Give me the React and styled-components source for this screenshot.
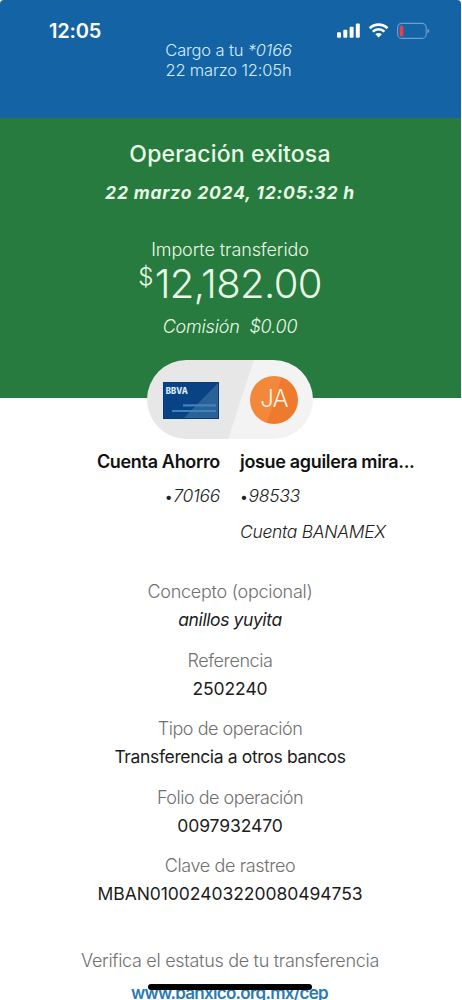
import styled, { createGlobalStyle } from "styled-components"

const details = [
    { label: "Concepto (opcional)", labelSpacing: -0.27, value: "anillos yuyita", spacing: -0.4, italic: true },
    { label: "Referencia", labelSpacing: -0.4, value: "2502240", spacing: -0.1 },
    { label: "Tipo de operación", labelSpacing: -0.46, value: "Transferencia a otros bancos", spacing: -0.35 },
    { label: "Folio de operación", labelSpacing: -0.48, value: "0097932470", spacing: -0.1 },
    { label: "Clave de rastreo", labelSpacing: -0.38, value: "MBAN01002403220080494753", spacing: -0.05 },
]

export default function App() {
    return (
        <>
            <GlobalStyle />
            <Screen>
                <Header>
                    <StatusBar>
                        <Clock>12:05</Clock>
                        <StatusIcons />
                    </StatusBar>
                    <HeaderText>
                        <p>Cargo a tu <em>*0166</em></p>
                        <p>22 marzo 12:05h</p>
                    </HeaderText>
                </Header>
                <Summary>
                    <Title>Operación exitosa</Title>
                    <DateText>22 marzo 2024, 12:05:32 h</DateText>
                    <AmountLabel>Importe transferido</AmountLabel>
                    <Amount><sup>$</sup>12,182.00</Amount>
                    <Fee>Comisión&nbsp; $0.00</Fee>
                </Summary>
                <Pill>
                    <BankCard />
                    <Avatar>JA</Avatar>
                </Pill>
                <Accounts>
                    <Account $align="right">
                        <h2>Cuenta Ahorro</h2>
                        <p><b>•</b>70166</p>
                    </Account>
                    <Account>
                        <h2>josue aguilera mira...</h2>
                        <p><b>•</b>98533</p>
                        <p>Cuenta BANAMEX</p>
                    </Account>
                </Accounts>
                <Details>
                    {details.map((d) => (
                        <div key={d.label}>
                            <Label $spacing={d.labelSpacing}>{d.label}</Label>
                            <Value $italic={d.italic} $spacing={d.spacing}>{d.value}</Value>
                        </div>
                    ))}
                </Details>
                <Verify>Verifica el estatus de tu transferencia</Verify>
                <Link>www.banxico.org.mx/cep</Link>
                <HomeBar />
            </Screen>
        </>
    )
}

function StatusIcons() {
    return (
        <svg width="94" height="18" viewBox="0 0 94 18" fill="none">
            <g fill="#fff">
                <rect x="1" y="10.2" width="4" height="5.6" rx="1" />
                <rect x="7.3" y="7.8" width="4" height="8" rx="1" />
                <rect x="13.6" y="4.8" width="4" height="11" rx="1" />
                <rect x="19.8" y="1.4" width="4" height="14.4" rx="1" />
            </g>
            <g stroke="#fff" strokeWidth="2.7">
                <path d="M33.7 6.2A13 13 0 0 1 51.5 6.2" />
                <path d="M36.8 9.6A8.3 8.3 0 0 1 48.4 9.6" />
            </g>
            <path d="M39.4 12.2A4.6 4.6 0 0 1 45.8 12.2L42.6 15.6Z" fill="#fff" />
            <rect x="61.6" y="1.4" width="28.6" height="15" rx="4.2" stroke="#6f9fd0" strokeWidth="1.1" />
            <rect x="63.6" y="3.5" width="3.8" height="10.8" rx="1.5" fill="#e8404a" />
            <path d="M91.4 6.7Q93.4 7.5 93.4 9T91.4 11.3Z" fill="#6f9fd0" />
        </svg>
    )
}

function BankCard() {
    return (
        <CardArt viewBox="0 0 56 37">
            <rect width="56" height="37" fill="#0a4385" />
            <path d="M56 0V37H20Z" fill="#2a6298" />
            <path d="M20 23.4H53M9 29H53" stroke="#3f83bb" strokeWidth="2.2" />
            <rect x=".5" y=".5" width="55" height="36" fill="none" stroke="#073b7a" />
            <text x="2.8" y="11.8" textLength="22" lengthAdjust="spacingAndGlyphs">BBVA</text>
        </CardArt>
    )
}

const GlobalStyle = createGlobalStyle`
    body {
        margin: 0;
        background-color: #fff;
        font-family: Inter, "Noto Sans", sans-serif;
    }
    p, h1, h2 {
        margin: 0;
    }
`

const Screen = styled.div`
    position: relative;
    display: flex;
    flex-direction: column;
    width: 461px;
    height: 1000px;
    overflow: hidden;
    text-align: center;
    > * {
        flex-shrink: 0;
    }
`

const Header = styled.header`
    height: 118px;
    box-sizing: border-box;
    padding-top: 20px;
    border-radius: 4px 4px 0 0;
    background-color: #1464a5;
    color: #fff;
`

const StatusBar = styled.div`
    display: flex;
    justify-content: space-between;
    height: 20px;
    padding: 0 31px 0 49px;
    svg {
        margin-top: 2px;
    }
`

const Clock = styled.span`
    font-size: 20px;
    line-height: 22px;
    font-weight: 600;
    letter-spacing: -0.2px;
`

const HeaderText = styled.div`
    display: flex;
    flex-direction: column;
    padding-right: 4px;
    font-size: 16.5px;
    line-height: 20px;
    font-weight: 300;
    letter-spacing: -0.15px;
    color: #d3ecfa;
`

const Summary = styled.section`
    display: flex;
    flex-direction: column;
    height: 280px;
    padding-right: 1px;
    background-color: #277b3e;
    color: #eaf8e6;
`

const Title = styled.h1`
    margin-top: 21px;
    font-size: 23px;
    line-height: 30px;
    font-weight: 500;
    letter-spacing: 0.15px;
`

const DateText = styled.p`
    margin-top: 12px;
    font-size: 17.5px;
    line-height: 24px;
    font-weight: 700;
    font-style: italic;
    letter-spacing: 0.8px;
`

const AmountLabel = styled.p`
    margin-top: 33px;
    font-size: 18px;
    line-height: 24px;
    font-weight: 300;
    letter-spacing: -0.1px;
`

const Amount = styled.p`
    height: 44px;
    font-size: 40px;
    line-height: 44px;
    font-weight: 300;
    letter-spacing: -0.6px;
    sup {
        display: inline-block;
        vertical-align: 13px;
        margin-right: 2px;
        font-size: 24px;
        line-height: 20px;
    }
`

const Fee = styled.p`
    margin-top: 9px;
    font-size: 18px;
    line-height: 24px;
    font-weight: 300;
    font-style: italic;
    letter-spacing: -0.18px;
`

const Pill = styled.div`
    display: flex;
    align-items: center;
    justify-content: space-between;
    align-self: center;
    box-sizing: border-box;
    width: 166px;
    height: 79px;
    margin: -38px 1px 0 0;
    padding: 0 15px 0 16px;
    border-radius: 40px;
    background: linear-gradient(108deg, #e7e7e8 55.5%, #f3f3f3 56%);
`

const CardArt = styled.svg`
    width: 56px;
    height: 37px;
    margin-top: 2px;
    text {
        fill: #dcebf7;
        font-size: 9.4px;
        font-weight: 800;
    }
`

const Avatar = styled.span`
    width: 48px;
    height: 48px;
    border-radius: 50%;
    background: linear-gradient(108deg, #f4883a 50%, #ee7a2d 51%);
    color: #fff3e4;
    font-size: 24px;
    line-height: 46px;
    font-weight: 300;
    letter-spacing: -0.8px;
`

const Accounts = styled.section`
    display: grid;
    grid-template-columns: 220px 1fr;
    column-gap: 20px;
    height: 120px;
    padding-top: 6px;
`

const Account = styled.div`
    text-align: ${({ $align }) => $align || "left"};
    color: #222;
    h2 {
        font-size: 18px;
        line-height: 34px;
        font-weight: 600;
        letter-spacing: -0.33px;
        color: #111;
    }
    p {
        font-size: 17.5px;
        line-height: 34.5px;
        font-weight: 300;
        font-style: italic;
        letter-spacing: -0.3px;
    }
    b {
        margin-right: 1px;
        font-size: 14px;
        font-style: normal;
    }
`

const Details = styled.section`
    display: flex;
    flex-direction: column;
    gap: 12.6px;
    padding: 13px 1px 0 0;
`

const Label = styled.p`
    font-size: 18px;
    line-height: 28px;
    font-weight: 300;
    letter-spacing: ${({ $spacing }) => $spacing}px;
    color: #707070;
`

const Value = styled.p`
    font-size: 17.5px;
    line-height: 28px;
    font-weight: 400;
    font-style: ${({ $italic }) => ($italic ? "italic" : "normal")};
    letter-spacing: ${({ $spacing }) => $spacing}px;
    color: #1c1c1c;
`

const Verify = styled.p`
    margin-top: 38px;
    padding-right: 1px;
    font-size: 18px;
    line-height: 30px;
    font-weight: 300;
    letter-spacing: -0.3px;
    color: #707070;
`

const Link = styled.p`
    padding-right: 2px;
    font-size: 17px;
    line-height: 34px;
    font-weight: 600;
    letter-spacing: -0.7px;
    color: #2a7bb3;
`

const HomeBar = styled.div`
    position: absolute;
    left: 148px;
    top: 984px;
    width: 164px;
    height: 6px;
    border-radius: 3px;
    background-color: #000;
`
